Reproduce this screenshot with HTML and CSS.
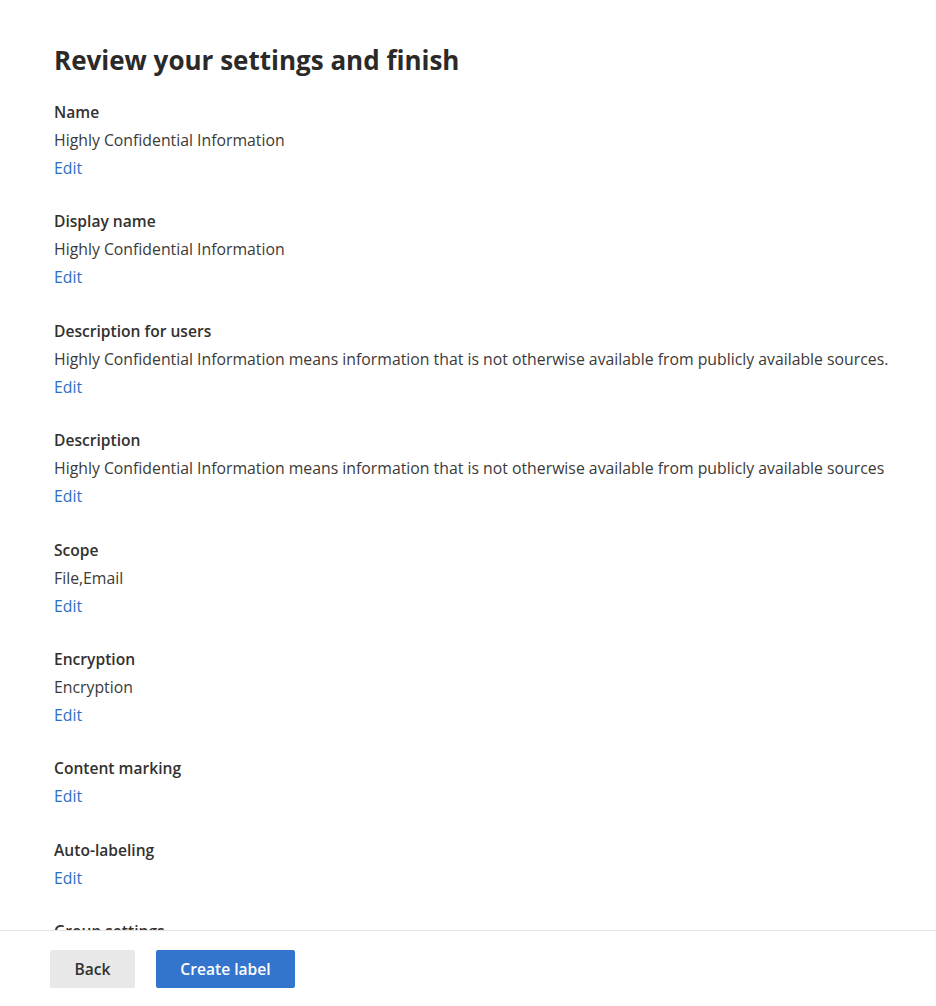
FILE: index.html
```html
<!DOCTYPE html>
<html lang="en">
<head>
<meta charset="utf-8">
<title>Review your settings and finish</title>
<link rel="stylesheet" href="styles.css">
</head>
<body>
<div class="page">
  <main class="content">
    <h1 class="title">Review your settings and finish</h1>
    <section class="item">
      <div class="label">Name</div>
      <div class="value">Highly Confidential Information</div>
      <a class="edit" href="#">Edit</a>
    </section>
    <section class="item">
      <div class="label">Display name</div>
      <div class="value">Highly Confidential Information</div>
      <a class="edit" href="#">Edit</a>
    </section>
    <section class="item">
      <div class="label">Description for users</div>
      <div class="value">Highly Confidential Information means information that is not otherwise available from publicly available sources.</div>
      <a class="edit" href="#">Edit</a>
    </section>
    <section class="item">
      <div class="label">Description</div>
      <div class="value">Highly Confidential Information means information that is not otherwise available from publicly available sources</div>
      <a class="edit" href="#">Edit</a>
    </section>
    <section class="item">
      <div class="label">Scope</div>
      <div class="value">File,Email</div>
      <a class="edit" href="#">Edit</a>
    </section>
    <section class="item">
      <div class="label">Encryption</div>
      <div class="value">Encryption</div>
      <a class="edit" href="#">Edit</a>
    </section>
    <section class="item">
      <div class="label">Content marking</div>
      <a class="edit" href="#">Edit</a>
    </section>
    <section class="item">
      <div class="label">Auto-labeling</div>
      <a class="edit" href="#">Edit</a>
    </section>
    <section class="item">
      <div class="label">Group settings</div>
      <a class="edit" href="#">Edit</a>
    </section>
  </main>
  <footer class="footer">
    <button class="btn btn-default" type="button">Back</button>
    <button class="btn btn-primary" type="button">Create label</button>
  </footer>
</div>
</body>
</html>
```

FILE: styles.css
```css
html, body {
  margin: 0;
  padding: 0;
  background: #ffffff;
}

body {
  font-family: "Open Sans", "Noto Sans", "Liberation Sans", sans-serif;
  color: #323130;
}

.page {
  display: flex;
  flex-direction: column;
  height: 100vh;
}

.content {
  flex: 1;
  min-height: 0;
  overflow: hidden;
  padding: 40px 0 0 54px;
}

.title {
  margin: 0 0 18px;
  font-size: 26px;
  line-height: 40px;
  font-weight: 700;
  color: #2b2a29;
}

.item {
  display: flex;
  flex-direction: column;
  align-items: flex-start;
  margin-bottom: 25.4px;
}

.label {
  font-size: 15.6px;
  line-height: 28px;
  font-weight: 600;
  color: #323130;
}

.value {
  font-size: 15.8px;
  line-height: 28px;
  font-weight: 400;
  color: #3b3a39;
}

.edit {
  font-size: 15.8px;
  line-height: 28px;
  color: #2b6fc6;
  text-decoration: none;
}

.footer {
  flex: none;
  display: flex;
  gap: 21px;
  align-items: center;
  border-top: 1px solid #e4e4e4;
  padding: 19px 0 18px 50px;
}

.btn {
  height: 38px;
  border: none;
  border-radius: 2px;
  font-family: inherit;
  font-size: 15.6px;
  font-weight: 600;
  padding: 0;
  text-align: center;
  cursor: pointer;
}

.btn-default {
  width: 85px;
  background: #e8e8e8;
  color: #323130;
}

.btn-primary {
  width: 139px;
  background: #3375cd;
  color: #ffffff;
}
```
